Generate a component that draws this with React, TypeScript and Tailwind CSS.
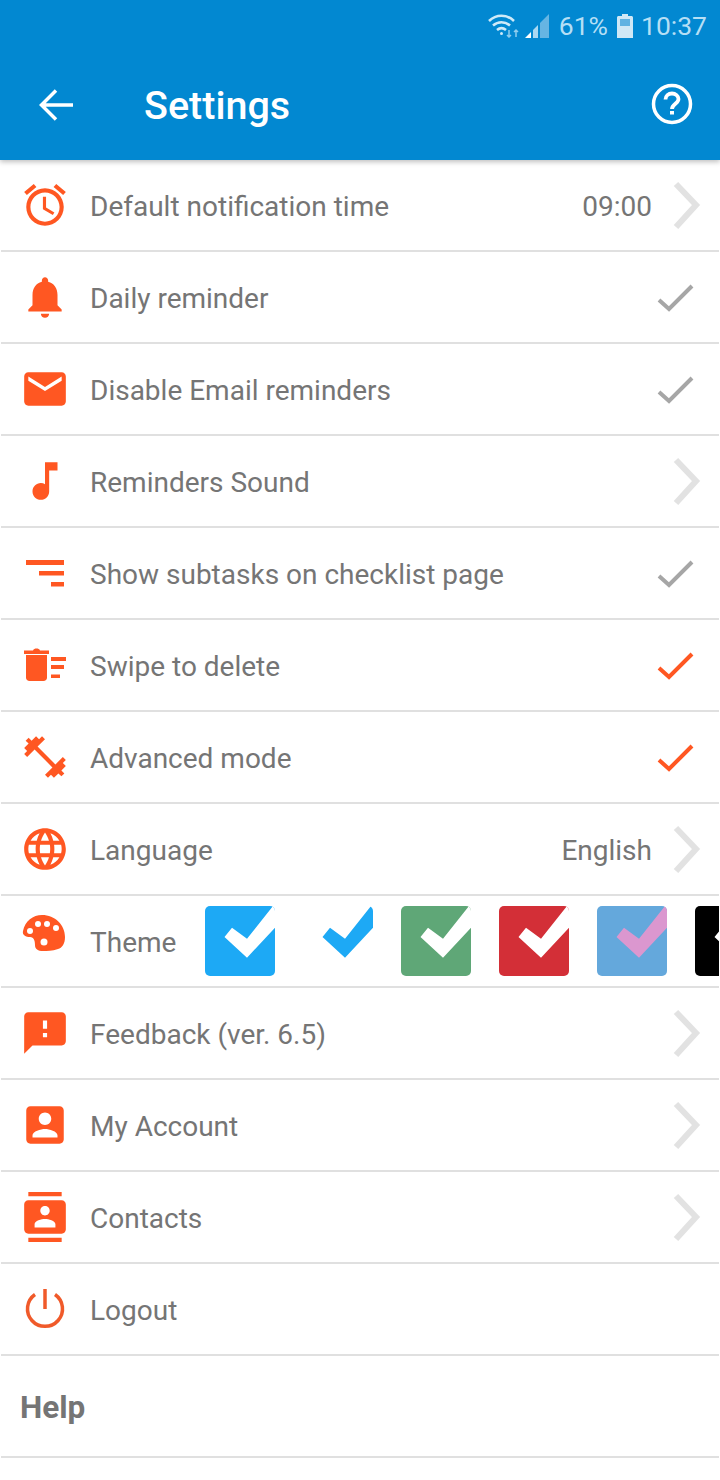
import type { ReactNode } from 'react';

const ORANGE = '#FF5722';

function Md({ d }: { d: string }) {
  return (
    <svg viewBox="0 0 24 24" className="w-[50px] h-[50px] shrink-0" fill={ORANGE}>
      <path d={d} />
    </svg>
  );
}

function Box({ children, className }: { children: ReactNode; className?: string }) {
  return (
    <svg viewBox="0 0 50 50" className={`w-[50px] h-[50px] shrink-0 ${className ?? ''}`} fill={ORANGE}>
      {children}
    </svg>
  );
}

const alarm = 'M22 5.72l-4.6-3.86-1.29 1.53 4.6 3.86L22 5.72zM7.88 3.39L6.6 1.86 2 5.71l1.29 1.53 4.59-3.85zM12.5 8H11v6l4.75 2.85.75-1.23-4-2.37V8zM12 4c-4.97 0-9 4.03-9 9s4.03 9 9 9 9-4.03 9-9-4.03-9-9-9zm0 16c-3.87 0-7-3.13-7-7s3.13-7 7-7 7 3.13 7 7-3.13 7-7 7z';
const bell = 'M12 22c1.1 0 2-.9 2-2h-4c0 1.1.89 2 2 2zm6-6v-5c0-3.07-1.64-5.64-4.5-6.32V4c0-.83-.67-1.5-1.5-1.5s-1.5.67-1.5 1.5v.68C7.63 5.36 6 7.92 6 11v5l-2 2v1h16v-1l-2-2z';
const mail = 'M20 4H4c-1.1 0-1.99.9-1.99 2L2 18c0 1.1.9 2 2 2h16c1.1 0 2-.9 2-2V6c0-1.1-.9-2-2-2zm0 4l-8 5-8-5V6l8 5 8-5v2z';
const music = 'M12 3v10.55c-.59-.34-1.27-.55-2-.55-2.21 0-4 1.79-4 4s1.79 4 4 4 4-1.79 4-4V7h4V3h-6z';
const barbell = 'M20.57 14.86L22 13.43 20.57 12 17 15.57 8.43 7 12 3.43 10.57 2 9.14 3.43 7.71 2 5.57 4.14 4.14 2.71 2.71 4.14l1.43 1.43L2 7.71l1.43 1.43L2 10.57 3.43 12 7 8.43 15.57 17 12 20.57 13.43 22l1.43-1.43L16.29 22l2.14-2.14 1.43 1.43 1.43-1.43-1.43-1.43L22 16.29z';
const globe = 'M11.99 2C6.47 2 2 6.48 2 12s4.47 10 9.99 10C17.52 22 22 17.52 22 12S17.52 2 11.99 2zm6.93 6h-2.95c-.32-1.25-.78-2.45-1.38-3.56 1.84.63 3.37 1.91 4.33 3.56zM12 4.04c.83 1.2 1.48 2.53 1.91 3.96h-3.82c.43-1.43 1.08-2.76 1.91-3.96zM4.26 14C4.1 13.36 4 12.69 4 12s.1-1.36.26-2h3.38c-.08.66-.14 1.32-.14 2 0 .68.06 1.34.14 2H4.26zm.82 2h2.95c.32 1.25.78 2.45 1.38 3.56-1.84-.63-3.37-1.9-4.33-3.56zm2.95-8H5.08c.96-1.66 2.49-2.93 4.33-3.56C8.81 5.55 8.35 6.75 8.03 8zM12 19.96c-.83-1.2-1.48-2.53-1.91-3.96h3.82c-.43 1.43-1.08 2.76-1.91 3.96zM14.34 14H9.66c-.09-.66-.16-1.32-.16-2 0-.68.07-1.35.16-2h4.68c.09.65.16 1.32.16 2 0 .68-.07 1.34-.16 2zm.25 5.56c.6-1.11 1.06-2.31 1.38-3.56h2.95c-.96 1.65-2.49 2.93-4.33 3.56zM16.36 14c.08-.66.14-1.32.14-2 0-.68-.06-1.34-.14-2h3.38c.16.64.26 1.31.26 2s-.1 1.36-.26 2h-3.38z';
const feedback = 'M20 2H4c-1.1 0-1.99.9-1.99 2L2 22l4-4h14c1.1 0 2-.9 2-2V4c0-1.1-.9-2-2-2zm-7 12h-2v-2h2v2zm0-4h-2V6h2v4z';
const account = 'M3 5v14c0 1.1.89 2 2 2h14c1.1 0 2-.9 2-2V5c0-1.1-.9-2-2-2H5c-1.11 0-2 .9-2 2zm12 4c0 1.66-1.34 3-3 3s-3-1.34-3-3 1.34-3 3-3 3 1.34 3 3zm-9 8c0-2 4-3.1 6-3.1s6 1.1 6 3.1v1H6v-1z';
const contacts = 'M20 0H4v2h16V0zM4 24h16v-2H4v2zM20 4H4c-1.1 0-2 .9-2 2v12c0 1.1.9 2 2 2h16c1.1 0 2-.9 2-2V6c0-1.1-.9-2-2-2zm-8 2.75c1.24 0 2.25 1.01 2.25 2.25s-1.01 2.25-2.25 2.25S9.75 10.24 9.75 9 10.76 6.75 12 6.75zM17 17H7v-1.5c0-1.67 3.33-2.5 5-2.5s5 .83 5 2.5V17z';

function FilterIcon() {
  return (
    <Box>
      <rect x="6" y="12" width="38" height="5" />
      <rect x="19" y="23" width="25" height="4.5" />
      <rect x="31" y="34" width="13" height="4.5" />
    </Box>
  );
}

function TrashIcon() {
  return (
    <Box>
      <path d="M4 10.5h9c.5-1.5 2-2 3.500-2s3 .5 3.500 2h9v3.500H4z" />
      <path d="M6 15h21v22.500c0 2-1.500 3.500-3.500 3.500h-14C7.500 41 6 39.500 6 37.500z" />
      <rect x="31" y="17" width="15" height="4" />
      <rect x="31" y="25" width="13" height="4" />
      <rect x="31" y="34.500" width="9" height="3.500" />
    </Box>
  );
}

function PaletteIcon() {
  return (
    <Box className="mb-[16px]">
      <path d="M3 23C5 13 13 7 22 7c13 0 23 10 23 22 0 7-3 11-7 12-6 2-11 2-15 2-5 0-8-2-8-6 0-4-1-8-5-8-4 0-8-2-7-6z" />
      <circle cx="10" cy="23" r="3" fill="#fff" />
      <circle cx="18" cy="16" r="3" fill="#fff" />
      <circle cx="27" cy="16" r="3" fill="#fff" />
      <circle cx="36" cy="20" r="3" fill="#fff" />
      <circle cx="24" cy="34" r="3.500" fill="#fff" />
    </Box>
  );
}

function PowerIcon() {
  return (
    <svg viewBox="0 0 50 50" className="w-[50px] h-[50px] shrink-0 mb-[2px]" fill="none" stroke="#F05A2A" strokeWidth="3.500">
      <path d="M25 6v20" />
      <path d="M15 11.500a17.500 17.500 0 1 0 20 0" />
    </svg>
  );
}

function Chevron() {
  return (
    <svg viewBox="0 0 64 50" className="w-[64px] h-[50px]" fill="none" stroke="#E2E2E2" strokeWidth="6">
      <path d="M21 4l20 21-20 22" />
    </svg>
  );
}

function Check({ on }: { on?: boolean }) {
  return (
    <svg viewBox="0 0 64 50" className="w-[64px] h-[50px]" fill="none" stroke={on ? ORANGE : '#A6A6A6'} strokeWidth="4">
      <path d="M4 28l10 9 23-23" />
    </svg>
  );
}

function Row({ icon, label, value, right }: { icon: ReactNode; label: string; value?: string; right?: ReactNode }) {
  return (
    <div className="h-[92px] mx-px border-b-2 border-[#e0e0e0] flex items-center">
      <div className="w-[89px] pl-[19px] flex items-center shrink-0">{icon}</div>
      <span className="pt-[4px] text-[28px] text-[#757575]">{label}</span>
      <div className="ml-auto flex items-center">
        {value && <span className="pt-[4px] text-[28px] text-[#757575] mr-[3px]">{value}</span>}
        <div className="w-[64px] h-[50px]">{right}</div>
      </div>
    </div>
  );
}

function Swatch({ bg, tick }: { bg: string; tick: string }) {
  return (
    <svg viewBox="0 0 70 70" className="w-[70px] h-[70px] shrink-0">
      <defs>
        <clipPath id="swatch-clip">
          <rect width="70" height="70" rx="5" />
        </clipPath>
      </defs>
      <g clipPath="url(#swatch-clip)">
        <rect width="70" height="70" fill={bg} />
        <path d="M19.500 31L27 21.700l15 11L68 0h2v21.700L42 51.700z" fill={tick} />
      </g>
    </svg>
  );
}

const swatches = [
  { bg: '#1DA9F5', tick: '#ffffff' },
  { bg: '#ffffff', tick: '#1DA9F5' },
  { bg: '#5FA777', tick: '#ffffff' },
  { bg: '#D32F37', tick: '#ffffff' },
  { bg: '#64A8DC', tick: '#DB97CF' },
  { bg: '#000000', tick: '#ffffff' },
];

function StatusBar() {
  return (
    <div className="h-[52px] flex items-center justify-end pr-[13px] text-[#b5dff5] text-[26.5px]">
      <svg viewBox="0 0 34 24" className="w-[34px] h-[24px] mr-[2px]" fill="none" stroke="#cfeaf8" strokeWidth="2.500">
        <path d="M1 7c7-7 18-7 25 0" />
        <path d="M5 11.500c5-4.500 12-4.500 17 0" />
        <path d="M9 16c3-2.500 6-2.500 9 0" />
        <circle cx="13.500" cy="19.500" r="1.500" fill="#cfeaf8" stroke="none" />
        <path d="M21 16v7M19 21l2 2 2-2M28 23v-7M26 18l2-2 2 2" strokeWidth="1.500" stroke="#8fcdee" />
      </svg>
      <svg viewBox="0 0 26 26" className="w-[26px] h-[26px] mr-[9px]">
        <path d="M1 25l6-6v6z" fill="#ffffff" />
        <path d="M9 17l5-5v13H9z" fill="#a9d8f2" />
        <path d="M16 10l9-9v24h-9z" fill="#66b5e3" />
      </svg>
      <span className="mr-[9px]">61%</span>
      <svg viewBox="0 0 16 24" className="w-[16px] h-[24px] mr-[8px]">
        <path d="M5 0h6v2h3.500c.8 0 1.500.7 1.500 1.500V24H0V3.500C0 2.700.7 2 1.500 2H5z" fill="#cfe8f6" />
        <rect x="3" y="5" width="10" height="7" fill="#5fb2e2" />
      </svg>
      <span>10:37</span>
    </div>
  );
}

export default function App() {
  return (
    <div className="w-[720px] h-[1480px] overflow-hidden bg-white font-[Roboto,sans-serif]">
      <div className="h-[160px] bg-[#0288D1] relative z-10 shadow-[0_2px_5px_rgba(0,0,0,0.25)]">
        <StatusBar />
        <div className="flex items-center h-[108px]">
          <svg viewBox="0 0 36 36" className="w-[36px] h-[36px] ml-[38px] -mt-[2px]" fill="none" stroke="#fff" strokeWidth="3.500">
            <path d="M35 18H4M18 3.500L3.500 18 18 32.500" />
          </svg>
          <h1 className="ml-[70px] text-[39.5px] font-medium text-white">Settings</h1>
          <svg viewBox="0 0 44 44" className="w-[44px] h-[44px] ml-auto mr-[26px] -mt-[4px]" fill="none" stroke="#fff" strokeWidth="3.500">
            <circle cx="22" cy="22" r="18.500" />
            <path d="M15.500 17.500c0-3.500 3-6 6.500-6s6.500 2.500 6.500 5.500c0 4.500-6.500 5-6.500 10" strokeWidth="3.800" />
            <path d="M22 29v3.500" strokeWidth="4" />
          </svg>
        </div>
      </div>

      <Row icon={<Md d={alarm} />} label="Default notification time" value="09:00" right={<Chevron />} />
      <Row icon={<Md d={bell} />} label="Daily reminder" right={<Check />} />
      <Row icon={<Md d={mail} />} label="Disable Email reminders" right={<Check />} />
      <Row icon={<Md d={music} />} label="Reminders Sound" right={<Chevron />} />
      <Row icon={<FilterIcon />} label="Show subtasks on checklist page" right={<Check />} />
      <Row icon={<TrashIcon />} label="Swipe to delete" right={<Check on />} />
      <Row icon={<Md d={barbell} />} label="Advanced mode" right={<Check on />} />
      <Row icon={<Md d={globe} />} label="Language" value="English" right={<Chevron />} />

      <div className="h-[92px] mx-px border-b-2 border-[#e0e0e0] flex items-center overflow-hidden">
        <div className="w-[89px] pl-[19px] flex items-center shrink-0">
          <PaletteIcon />
        </div>
        <span className="pt-[4px] text-[28px] text-[#757575] w-[115px] shrink-0">Theme</span>
        <div className="flex gap-[28px]">
          {swatches.map((s) => (
            <Swatch key={s.bg} bg={s.bg} tick={s.tick} />
          ))}
        </div>
      </div>

      <Row icon={<Md d={feedback} />} label="Feedback (ver. 6.5)" right={<Chevron />} />
      <Row icon={<Md d={account} />} label="My Account" right={<Chevron />} />
      <Row icon={<Md d={contacts} />} label="Contacts" right={<Chevron />} />
      <Row icon={<PowerIcon />} label="Logout" />

      <div className="h-[102px] mx-px border-b-2 border-[#e0e0e0] flex items-center pl-[19px]">
        <span className="pt-[4px] text-[31.5px] font-bold text-[#757575]">Help</span>
      </div>
    </div>
  );
}
